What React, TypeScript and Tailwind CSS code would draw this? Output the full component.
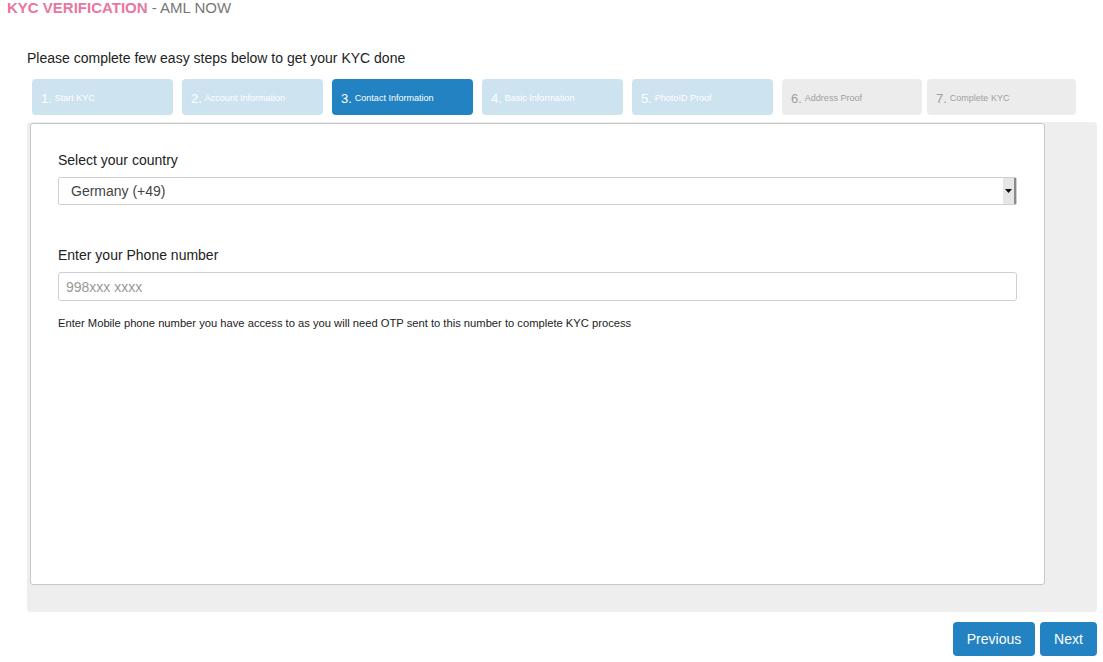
import React from 'react';

const steps = [
  { n: '1', label: 'Start KYC', state: 'done', w: 'w-[141px]' },
  { n: '2', label: 'Account Information', state: 'done', w: 'w-[141px]' },
  { n: '3', label: 'Contact Information', state: 'active', w: 'w-[141px]' },
  { n: '4', label: 'Basic Information', state: 'done', w: 'w-[141px]' },
  { n: '5', label: 'PhotoID Proof', state: 'done', w: 'w-[141px]' },
  { n: '6', label: 'Address Proof', state: 'todo', w: 'w-[140px]' },
  { n: '7', label: 'Complete KYC', state: 'todo', w: 'w-[149px]' },
];

function Step({ n, label, state, w }: { n: string; label: string; state: string; w: string }) {
  const tone =
    state === 'active'
      ? 'bg-[#2383c2] text-white'
      : state === 'done'
        ? 'bg-[#cde3f0] text-white'
        : 'bg-[#ececec] text-[#a0a0a0]';
  return (
    <div className={`${w} h-[36px] rounded-[4px] flex items-center pl-[9px] pt-[3px] ${tone}`}>
      <span className="text-[13px]">{n}.</span>
      <span className="text-[9px] ml-[3px] mt-[1px]">{label}</span>
    </div>
  );
}

export default function App() {
  return (
    <div className="w-[1103px] h-[662px] bg-white font-['Liberation_Sans',Arial,sans-serif] text-[#333] overflow-hidden">
      <h1 className="pl-[7px] text-[15px] leading-[15px]">
        <span className="font-bold text-[#e8769f]">KYC VERIFICATION</span>
        <span className="text-[#777]"> - AML NOW</span>
      </h1>

      <div className="ml-[27px] w-[1070px]">
        <p className="mt-[35px] text-[14px] leading-[16px] text-[#222]">
          Please complete few easy steps below to get your KYC done
        </p>

        <div className="mt-[13px] ml-[5px] flex gap-[9px]">
          {steps.slice(0, 6).map((s) => (
            <Step key={s.n} {...s} />
          ))}
          <div className="-ml-[4px]">
            <Step {...steps[6]} />
          </div>
        </div>

        <div className="mt-[7px] h-[490px] bg-[#eeeeee] rounded-[4px] pt-[1px] pl-[3px]">
          <div className="w-[1015px] h-[462px] bg-white border border-[#c8c8c8] rounded-[3px] pl-[27px] pr-[27px] pt-[28px]">
            <label className="block text-[14px] leading-[16px] text-[#222]">Select your country</label>
            <div className="mt-[9px] w-[959px] h-[28px] border border-[#cfcfcf] rounded-[2px] flex items-center justify-between">
              <span className="pl-[12px] text-[14px] text-[#444]">Germany (+49)</span>
              <span className="h-[26px] w-[13px] bg-[#e6e6e6] border-r-2 border-[#8a8a8a] flex items-center justify-center">
                <svg width="7" height="4" viewBox="0 0 7 4">
                  <path d="M0 0h7L3.5 4z" fill="#111" />
                </svg>
              </span>
            </div>

            <label className="block mt-[42px] text-[14px] leading-[16px] text-[#222]">Enter your Phone number</label>
            <div className="mt-[9px] w-[959px] h-[29px] border border-[#cfcfcf] rounded-[3px] flex items-center">
              <span className="pl-[7px] pt-[1px] text-[14px] text-[#999]">998xxx xxxx</span>
            </div>

            <p className="mt-[16px] text-[11.2px] leading-[13px] text-[#222]">
              Enter Mobile phone number you have access to as you will need OTP sent to this number to complete KYC process
            </p>
          </div>
        </div>

        <div className="mt-[10px] flex justify-end gap-[5px]">
          <button className="w-[82px] h-[34px] rounded-[4px] bg-[#2383c2] text-white text-[14px]">Previous</button>
          <button className="w-[57px] h-[34px] rounded-[4px] bg-[#2383c2] text-white text-[14px]">Next</button>
        </div>
      </div>
    </div>
  );
}
